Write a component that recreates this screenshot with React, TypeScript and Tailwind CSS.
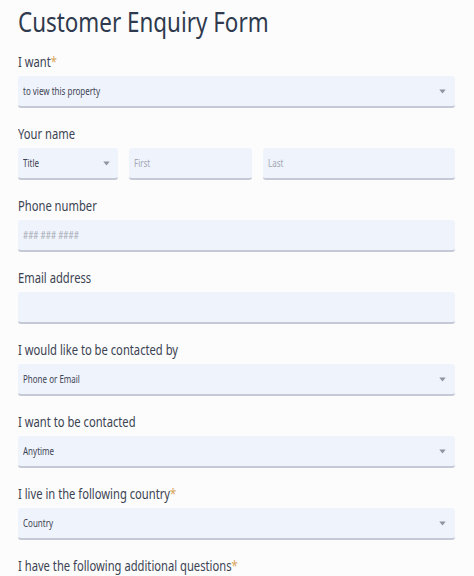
import React from "react";

const Chevron = () => (
  <svg width="7" height="5" viewBox="0 0 7 5" className="shrink-0">
    <path d="M0.3 0.6 L6.7 0.6 L3.5 4.4 Z" fill="#8d93a0" />
  </svg>
);

const T = ({ children }: { children: React.ReactNode }) => (
  <span className="inline-block origin-left scale-x-[0.8] whitespace-nowrap">{children}</span>
);

const Label = ({ text, req }: { text: string; req?: boolean }) => (
  <div className="h-[20px] text-[14px] leading-[20px] text-[#3b4352] mb-[4px]">
    <T>
      {text}
      {req && <span className="text-[#d9a75c]">*</span>}
    </T>
  </div>
);

const Field = ({
  text,
  placeholder,
  select,
  className = "",
}: {
  text?: string;
  placeholder?: string;
  select?: boolean;
  className?: string;
}) => (
  <div
    className={
      "h-[32px] flex items-center justify-between pl-[5px] pr-[9px] rounded-[3px] bg-[#eff3fc] border-b-[2px] border-[#c4c9d5] text-[10px] " +
      className
    }
  >
    {text ? (
      <span className="text-[#3d4454]">
        <T>{text}</T>
      </span>
    ) : (
      <span className="text-[#a3a8b2]">
        <T>{placeholder ?? ""}</T>
      </span>
    )}
    {select && <Chevron />}
  </div>
);

export default function App() {
  return (
    <div
      className="h-[576px] w-[474px] bg-[#fcfcfc] pl-[18px] pr-[19px] overflow-hidden"
      style={{ fontFamily: '"Noto Sans", "Open Sans", sans-serif' }}
    >
      <h1 className="pt-[3px] text-[28px] leading-[36px] text-[#2f3a4e] mb-[13px]">
        <T>Customer Enquiry Form</T>
      </h1>
      <div className="mb-[16px]">
        <Label text="I want" req />
        <Field text="to view this property" select />
      </div>
      <div className="mb-[16px]">
        <Label text="Your name" />
        <div className="flex gap-[11px]">
          <Field text="Title" select className="w-[100px] !pr-[8px]" />
          <Field placeholder="First" className="w-[123px]" />
          <Field placeholder="Last" className="flex-1" />
        </div>
      </div>
      <div className="mb-[16px]">
        <Label text="Phone number" />
        <Field placeholder="### ### ####" />
      </div>
      <div className="mb-[16px]">
        <Label text="Email address" />
        <Field />
      </div>
      <div className="mb-[16px]">
        <Label text="I would like to be contacted by" />
        <Field text="Phone or Email" select />
      </div>
      <div className="mb-[16px]">
        <Label text="I want to be contacted" />
        <Field text="Anytime" select />
      </div>
      <div className="mb-[16px]">
        <Label text="I live in the following country" req />
        <Field text="Country" select />
      </div>
      <div className="mb-[16px]">
        <Label text="I have the following additional questions" req />
        <Field />
      </div>
    </div>
  );
}
